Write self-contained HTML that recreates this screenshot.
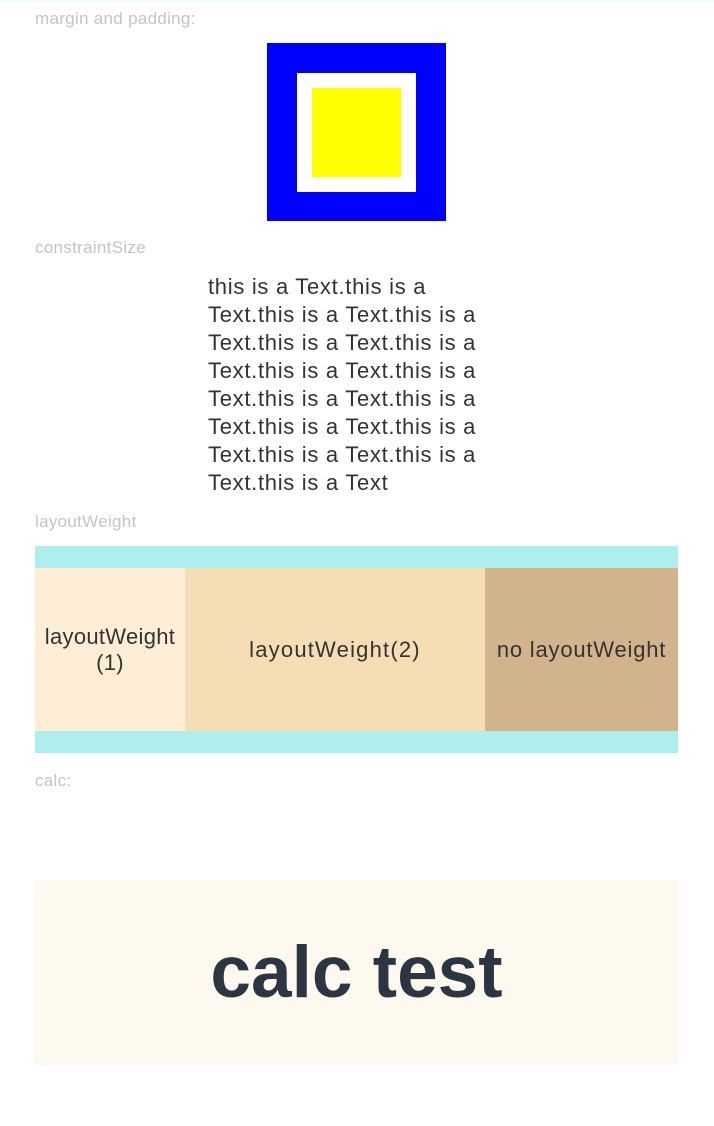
<!DOCTYPE html>
<html><head><meta charset="utf-8"><style>
html,body{margin:0;padding:0;background:#fff;width:714px;height:1126px;overflow:hidden;position:relative;font-family:"Liberation Sans",sans-serif}
.a{position:absolute}
.lbl{position:absolute;left:35px;font-size:17px;letter-spacing:0.3px;color:#c4c4c4;line-height:20px}
.t{position:absolute;left:208px;top:273px;font-size:22px;line-height:28px;color:#333;letter-spacing:0.7px}
.cell{position:absolute;top:568px;height:163px;display:flex;align-items:center;justify-content:center;text-align:center;font-size:22px;line-height:26px;color:#333;letter-spacing:1.2px}
</style></head><body>
<div class="a" style="left:0;top:0;width:714px;height:2px;background:#eefbfb"></div>
<div class="lbl" style="top:9px">margin and padding:</div>
<div class="a" style="left:267px;top:43px;width:179px;height:178px;background:#00f"></div>
<div class="a" style="left:297px;top:73px;width:119px;height:119px;background:#fff"></div>
<div class="a" style="left:312px;top:88px;width:89px;height:89px;background:#ff0"></div>
<div class="lbl" style="top:238px">constraintSize</div>
<div class="t">this is a Text.this is a<br>Text.this is a Text.this is a<br>Text.this is a Text.this is a<br>Text.this is a Text.this is a<br>Text.this is a Text.this is a<br>Text.this is a Text.this is a<br>Text.this is a Text.this is a<br>Text.this is a Text</div>
<div class="lbl" style="top:512px">layoutWeight</div>
<div class="a" style="left:35px;top:546px;width:643px;height:207px;background:#afeeee"></div>
<div class="cell" style="left:35px;width:150px;background:#fdeed5;letter-spacing:0.3px">layoutWeight<br>(1)</div>
<div class="cell" style="left:185px;width:300px;background:#f5deb3">layoutWeight(2)</div>
<div class="cell" style="left:485px;width:193px;background:#d2b48c;letter-spacing:0.8px">no layoutWeight</div>
<div class="lbl" style="top:771px">calc:</div>
<div class="a" style="left:35px;top:880px;width:643px;height:185px;background:#fdf9ef;display:flex;align-items:center;justify-content:center;font-weight:bold;font-size:73px;color:#2c3642">calc test</div>
</body></html>
